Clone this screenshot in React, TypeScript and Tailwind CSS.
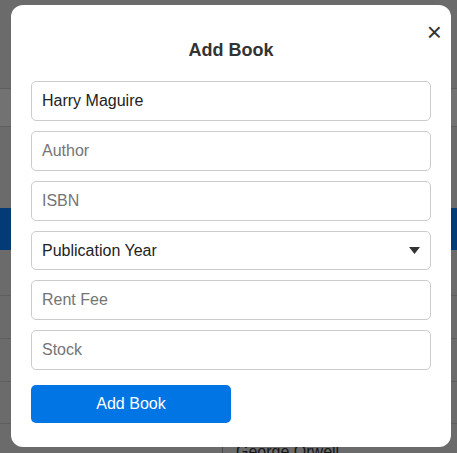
import React from "react";

export default function App() {
  const font = { fontFamily: '"Liberation Sans", Arial, sans-serif' };
  const inputCls =
    "w-full h-[40px] rounded-[5px] border border-[#cccccc] bg-white px-[10px] text-[16px] text-[#222222] placeholder:text-[#757575] outline-none";
  return (
    <div className="relative w-[457px] h-[453px] overflow-hidden bg-[#6b6b6b]" style={font}>
      {/* background page (dimmed) */}
      <div className="flex flex-col">
        <div className="h-[89px] border-b border-[#5e5e5e]" />
        <div className="h-[38px] bg-[#727272] border-b border-[#5e5e5e]" />
        <div className="h-[81px]" />
        <div className="h-[42px] bg-[#033b77]" />
        <div className="h-[46px] border-b border-[#5e5e5e]" />
        <div className="h-[43px] border-b border-[#5e5e5e]" />
        <div className="h-[43px] border-b border-[#5e5e5e]" />
        <div className="h-[42px] border-b border-[#5e5e5e]" />
        <div className="flex h-[40px]">
          <div className="w-[223px] border-r border-[#4a4a4a]" />
          <div className="pl-[13px] pt-[16px] text-[16px] leading-[24px] text-[#151515]">George Orwell</div>
        </div>
      </div>

      {/* modal */}
      <div className="absolute left-[11px] top-[5px] w-[440px] h-[442px] rounded-[12px] bg-white flex flex-col px-[20px] pt-[33px]">
        <button className="absolute right-[9px] top-[14px] text-[26px] leading-none text-[#333333]">
          ×
        </button>
        <h2 className="h-[24px] text-center text-[18px] leading-[24px] font-bold text-[#333333]">Add Book</h2>
        <div className="mt-[19px] flex flex-col gap-[10px]">
          <input className={inputCls} defaultValue="Harry Maguire" />
          <input className={inputCls} placeholder="Author" />
          <input className={inputCls} placeholder="ISBN" />
          <div className="relative h-[39px] rounded-[5px] border border-[#cccccc] bg-white flex items-center px-[10px]">
            <span className="text-[16px] text-[#222222]">Publication Year</span>
            <svg className="absolute right-[10px] top-[15px]" width="11" height="7" viewBox="0 0 11 7">
              <path d="M0 0 H11 L5.5 7 Z" fill="#333333" />
            </svg>
          </div>
          <input className={inputCls} placeholder="Rent Fee" />
          <input className={inputCls} placeholder="Stock" />
        </div>
        <button className="mt-[15px] w-[200px] h-[38px] rounded-[5px] bg-[#0275e4] text-white text-[16px]">
          Add Book
        </button>
      </div>
    </div>
  );
}
